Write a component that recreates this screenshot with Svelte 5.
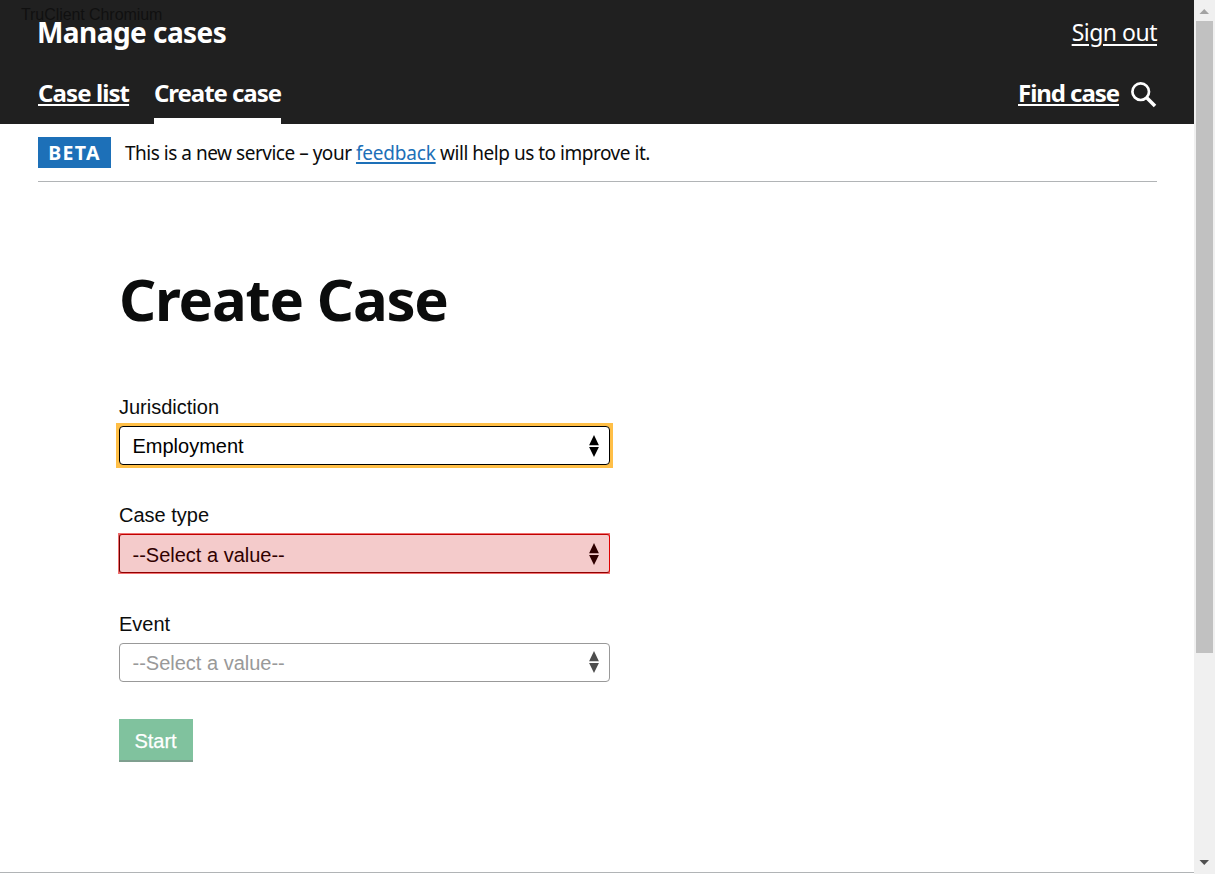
<script>
  const fields = [
    { id: 'jurisdiction', label: 'Jurisdiction', value: 'Employment', state: 'focused' },
    { id: 'case-type', label: 'Case type', value: '--Select a value--', state: 'highlighted' },
    { id: 'event', label: 'Event', value: '--Select a value--', state: 'disabled' }
  ];
</script>

<div class="window">
  <div class="page">
    <header>
      <div class="brand-row">
        <span class="brand">Manage cases</span>
        <a class="sign-out" href="#signout">Sign out</a>
      </div>
      <nav>
        <a class="case-list" href="#list">Case list</a>
        <a class="create" href="#create">Create case</a>
        <a class="find" href="#find">Find case</a>
        <svg class="search" viewBox="0 0 26 26" width="26" height="26" aria-hidden="true">
          <circle cx="9.7" cy="9.7" r="8.3" fill="none" stroke="#fff" stroke-width="2.7" />
          <path d="M15.5 15.5 24 24" stroke="#fff" stroke-width="3.5" />
        </svg>
      </nav>
      <span class="watermark">TruClient Chromium</span>
    </header>

    <div class="phase">
      <strong class="tag">BETA</strong>
      <span class="notice">This is a new service – your <a href="#feedback">feedback</a> will help us to improve it.</span>
    </div>

    <main>
      <h1><span>Create Case</span></h1>
      {#each fields as field (field.id)}
        <div class="field">
          <span class="label" id={field.id}>{field.label}</span>
          <div class="frame {field.state}">
            <div class="select" role="combobox" aria-labelledby={field.id} aria-expanded="false" aria-controls={field.id} tabindex="-1">
              <span class="value">{field.value}</span>
              <svg viewBox="0 0 10 22" width="10" height="22" aria-hidden="true">
                <path d="M5 0 9.9 10.3H.1ZM5 22 9.9 12H.1Z" fill="currentColor" />
              </svg>
            </div>
          </div>
        </div>
      {/each}
      <button disabled>Start</button>
    </main>
    <div class="footer-line"></div>
  </div>

  <div class="scrollbar">
    <svg viewBox="0 0 21 21" width="21" height="21"><path d="M5.5 14h9.5l-4.75-5Z" fill="#a3a3a3" /></svg>
    <div class="thumb"></div>
    <svg viewBox="0 0 21 21" width="21" height="21"><path d="M5.5 7h9.5l-4.75 5Z" fill="#505050" /></svg>
  </div>
</div>

<style>
  :global(body) { margin: 0; background: #fff; }
  .window {
    display: flex;
    width: 1215px;
    height: 874px;
    overflow: hidden;
    font-family: "Noto Sans", sans-serif;
    color: #0b0c0c;
    white-space: nowrap;
  }
  .page { width: 1194px; display: flex; flex-direction: column; }
  header {
    position: relative;
    height: 124px;
    box-sizing: border-box;
    padding: 0 37px 0 38px;
    background: #202020;
    color: #fff;
  }
  header a { color: #fff; }
  .brand-row { display: flex; justify-content: space-between; align-items: center; height: 64px; }
  .brand { margin: -1px 0 0 -1px; font-size: 28px; font-weight: 700; letter-spacing: -0.55px; }
  .sign-out { margin-top: -1px; font-size: 23px; line-height: 30px; letter-spacing: -0.5px; text-decoration-thickness: 2px; text-underline-offset: 3px; }
  nav { display: flex; height: 60px; font-size: 24px; font-weight: 700; line-height: 57px; }
  nav a { text-decoration-thickness: 2px; text-underline-offset: 2px; }
  .case-list { width: 91px; margin-right: 25px; letter-spacing: -0.9px; }
  .create { width: 127px; box-sizing: border-box; border-bottom: 6px solid #fff; text-decoration: none; letter-spacing: -1.05px; }
  .find { margin-left: auto; width: 101px; letter-spacing: -1.05px; }
  .search { margin: 18px 0 0 12px; }
  .watermark {
    position: absolute;
    left: 21px;
    top: 5px;
    font: 16px/19px "Liberation Sans", Arial, sans-serif;
    letter-spacing: -0.07px;
    color: #101010;
  }
  .phase {
    display: flex;
    align-items: center;
    height: 57px;
    margin: 0 37px 0 38px;
    border-bottom: 1px solid #b1b4b6;
  }
  .tag {
    width: 73px;
    height: 31px;
    margin-right: 14px;
    background: #1d70b8;
    color: #fff;
    font-size: 19.5px;
    line-height: 32px;
    text-align: center;
    letter-spacing: 1.3px;
  }
  .notice { font-size: 19px; line-height: 30px; letter-spacing: -0.48px; }
  .notice a { color: #1d70b8; letter-spacing: -0.2px; text-underline-offset: 2px; text-decoration-thickness: 2px; }
  main {
    flex: 1;
    padding: 80px 0 0 119px;
    font-family: "Liberation Sans", Arial, sans-serif;
    font-size: 20px;
  }
  h1 { margin: 0 0 62px; height: 70px; font: 700 58px/74px "Noto Sans", sans-serif; letter-spacing: -1.2px; }
  .field { height: 108.3px; }
  .label { display: block; height: 32px; line-height: 26px; }
  .frame { width: 491px; }
  .select {
    display: flex;
    justify-content: space-between;
    align-items: center;
    height: 39px;
    box-sizing: border-box;
    padding: 0 10.5px 0 12.5px;
    border: 1px solid #000;
    border-radius: 4px;
    background: #fff;
    color: #000;
  }
  .value { padding-top: 2px; }
  .focused { margin: -3px; padding: 3px; background: #ffbf47; }
  .highlighted { margin: -1px 0 0 -1px; padding: 1px 0 1px 1px; background: #f07070; }
  .highlighted .select {
    border-color: #c00000 #e00000 #900000 #700000;
    border-radius: 3px;
    background: #f4cbcb;
    color: #300000;
  }
  .highlighted .value { padding-top: 3px; }
  .disabled .select { border-color: #999; color: #999; }
  .disabled svg { color: #4d4d4d; }
  button {
    width: 74px;
    height: 43px;
    padding: 2px 1px 0 0;
    border: 0;
    background: #80c29e;
    color: #fff;
    box-shadow: inset 0 -2px #7f9f8f;
    font: 20px/24px "Liberation Sans", Arial, sans-serif;
    -webkit-text-stroke: 0.25px #fff;
  }
  .footer-line { height: 1px; margin-bottom: 1px; background: #b1b4b6; }
  .scrollbar { display: flex; flex-direction: column; width: 21px; background: #f0f0f0; }
  .scrollbar svg { flex: none; }
  .thumb { width: 17px; height: 632px; margin: 0 2px auto; background: #c1c1c1; }
</style>
